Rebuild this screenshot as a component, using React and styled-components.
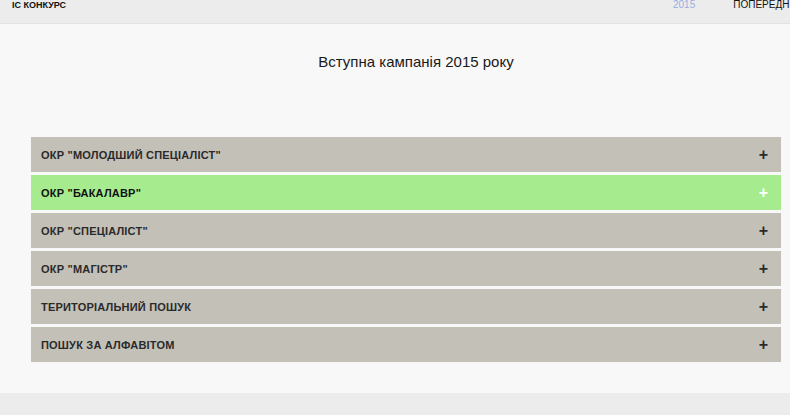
import React from 'react';
import styled, { createGlobalStyle } from 'styled-components';

const GlobalStyle = createGlobalStyle`
  html, body {
    margin: 0;
    padding: 0;
    overflow: hidden;
    background-color: #ececec;
    font-family: 'Liberation Sans', Arial, sans-serif;
  }
`;

const Page = styled.div`
  width: 790px;
  height: 415px;
  display: flex;
  flex-direction: column;
  overflow: hidden;
`;

const Header = styled.div`
  height: 23px;
  flex-shrink: 0;
  display: flex;
  align-items: flex-start;
  background-color: #ececec;
  border-bottom: 1px solid #e2e2e2;
  white-space: nowrap;
  overflow: hidden;
`;

const Brand = styled.div`
  flex: 0 0 673px;
  box-sizing: border-box;
  padding-left: 12px;
  margin-top: -1px;
  font-size: 9px;
  font-weight: bold;
  color: #111;
  line-height: 12px;
`;

const NavLink = styled.div`
  flex-shrink: 0;
  font-size: 10px;
  line-height: 12px;
  margin-top: -1px;
  color: ${(p) => (p.active ? '#98afe0' : '#111')};
  margin-right: ${(p) => (p.active ? '38px' : '0')};
`;

const Main = styled.div`
  height: 369px;
  flex-shrink: 0;
  background-color: #f8f8f8;
  display: flex;
  flex-direction: column;
  align-items: center;
`;

const Title = styled.h1`
  margin: 29px 0 0 0;
  font-size: 15px;
  line-height: 18px;
  font-weight: normal;
  color: #1a1a1a;
  padding-left: 42px;
`;

const List = styled.div`
  margin-top: 66px;
  width: 750px;
  margin-left: 22px;
  display: flex;
  flex-direction: column;
  gap: 3px;
`;

const Row = styled.div`
  height: 35px;
  display: flex;
  align-items: center;
  justify-content: space-between;
  padding: 0 13px 0 10px;
  background-color: ${(p) => (p.active ? '#a6ec8e' : '#c3c0b8')};
  cursor: pointer;
`;

const RowLabel = styled.span`
  font-size: 11px;
  font-weight: bold;
  letter-spacing: 0.2px;
  color: ${(p) => (p.active ? '#111' : '#2a2a2a')};
`;

const Plus = styled.span`
  font-size: 16px;
  font-weight: bold;
  line-height: 1;
  color: ${(p) => (p.active ? '#ffffff' : '#2a2a2a')};
`;

const Footer = styled.div`
  flex: 1;
  background-color: #ececec;
`;

const items = [
  'ОКР "МОЛОДШИЙ СПЕЦІАЛІСТ"',
  'ОКР "БАКАЛАВР"',
  'ОКР "СПЕЦІАЛІСТ"',
  'ОКР "МАГІСТР"',
  'ТЕРИТОРІАЛЬНИЙ ПОШУК',
  'ПОШУК ЗА АЛФАВІТОМ',
];

const App = () => {
  return (
    <Page>
      <GlobalStyle />
      <Header>
        <Brand>ІС КОНКУРС</Brand>
        <NavLink active>2015</NavLink>
        <NavLink>ПОПЕРЕДНІ РОКИ</NavLink>
      </Header>
      <Main>
        <Title>Вступна кампанія 2015 року</Title>
        <List>
          {items.map((label, i) => (
            <Row key={label} active={i === 1}>
              <RowLabel active={i === 1}>{label}</RowLabel>
              <Plus active={i === 1}>+</Plus>
            </Row>
          ))}
        </List>
      </Main>
      <Footer />
    </Page>
  );
};

export default App;
